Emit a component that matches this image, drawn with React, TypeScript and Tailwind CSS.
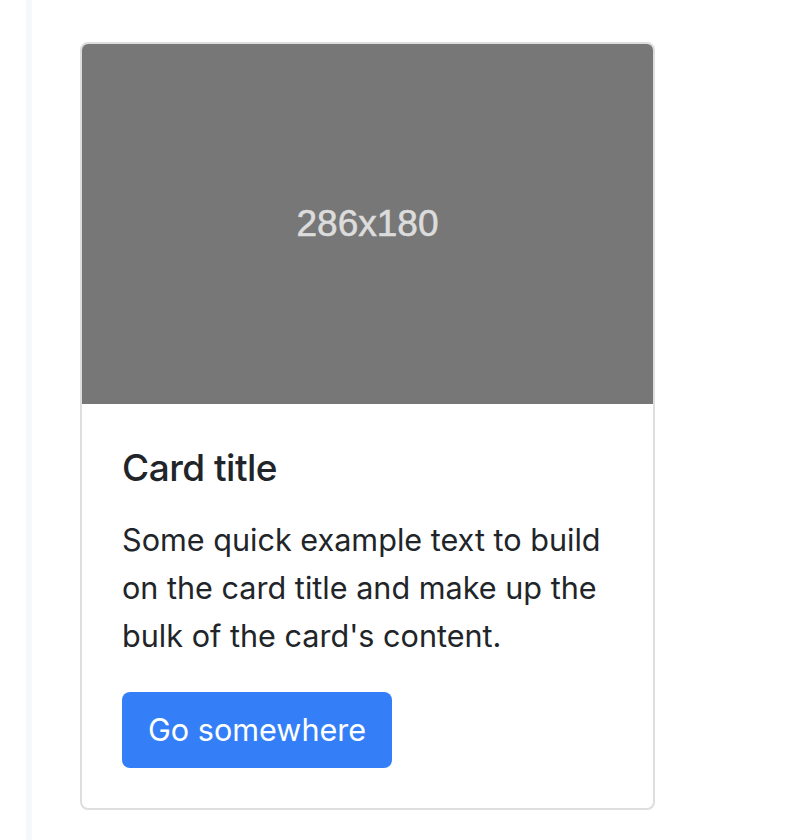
export default function App() {
  return (
    <div className="flex min-h-[840px] bg-white">
      <div className="ml-[26px] w-[6px] bg-[#f6f7f9]" />
      <div className="ml-[48px] mt-[42px] mb-[31px] w-[575px] self-start rounded-[8px] border-2 border-[#dedede] bg-white font-['Inter',sans-serif] text-[#212529]">
        <div className="flex h-[360px] items-center justify-center rounded-t-[6px] bg-[#777777]">
          <span className="font-['Liberation_Sans',Arial,sans-serif] text-[37px] text-[#dcdcdc] [-webkit-text-stroke:0.6px_#dcdcdc]">286x180</span>
        </div>
        <div className="p-[40px]">
          <h5 className="mb-[24px] text-[37px] font-medium leading-[48px] tracking-[-0.5px]">Card title</h5>
          <p className="mb-[32px] text-[30.6px] leading-[48px]">
            Some quick example text to build on the card title and make up the bulk of the card's content.
          </p>
          <a
            href="#"
            className="inline-block rounded-[8px] bg-[#347ff7] px-[26px] py-[12px] text-[30.6px] leading-[52px] text-white"
          >
            Go somewhere
          </a>
        </div>
      </div>
    </div>
  );
}
